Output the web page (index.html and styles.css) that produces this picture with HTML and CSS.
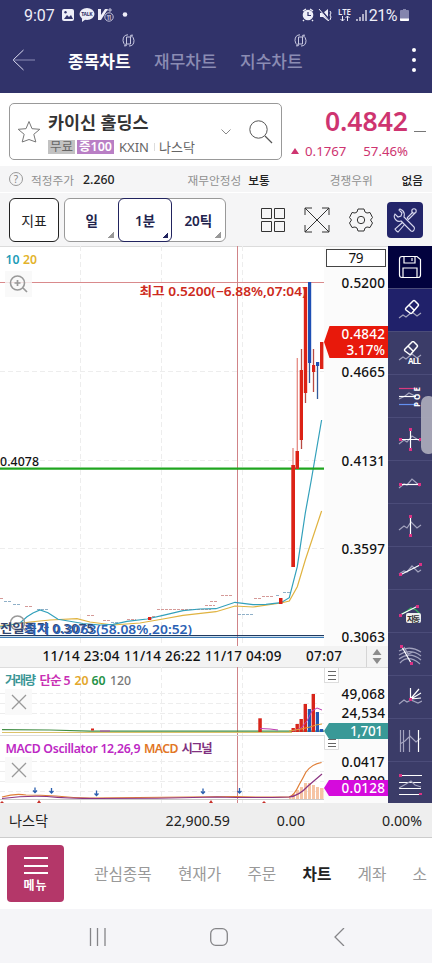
FILE: index.html
```html
<!DOCTYPE html>
<html lang="ko">

<head>
  <meta charset="UTF-8">
  <meta name="viewport" content="width=device-width, initial-scale=1.0">
  <title>종목차트</title>
  <link rel="stylesheet" href="styles.css">
</head>

<body>
  <header class="header">
    <div class="status-bar">
      <span class="clock">9:07</span>
      <svg class="status-left" width="70" height="16" viewBox="0 0 70 16">
        <rect x="1" y="2" width="12" height="12" rx="2" fill="#eeeef8" />
        <path d="M3 12l3-4 2 2 2-2 2 4z" fill="#31336a" />
        <circle cx="4.500" cy="5.200" r="1.200" fill="#31336a" />
        <ellipse cx="26" cy="7" rx="7.500" ry="6" fill="#eeeef8" />
        <path d="M21 11l0 4 4-3z" fill="#eeeef8" />
        <text x="20.300" y="9" font-size="5" font-weight="700" textLength="11.400" fill="#31336a">TALK</text>
        <path d="M37 2h3l0 6 4-6h3l-7 11h-3z" fill="#eeeef8" />
        <circle cx="48" cy="10" r="4.200" fill="#31336a" stroke="#c5c5dd" stroke-width="1" />
        <text x="45" y="13" font-size="7" textLength="6" fill="#eeeef8">11</text>
        <path d="M46 3h5M49 1v4" stroke="#c5c5dd" />
        <circle cx="64" cy="7.500" r="2.300" fill="#eeeef8" />
      </svg>
      <svg class="status-right" width="70" height="16" viewBox="0 0 70 16">
        <circle cx="7" cy="8" r="5.300" fill="#eeeef8" />
        <path d="M2 4l3-2M12 4L9 2M3 13l-1 1M11 13l1 1" stroke="#eeeef8" stroke-width="1.500" fill="none" />
        <path d="M7 5V8.500h3" stroke="#31336a" stroke-width="1.200" fill="none" />
        <path d="M19 6h3l5-4v12l-5-4h-3z" fill="#eeeef8" />
        <path d="M19 2l10 12" stroke="#31336a" stroke-width="2" />
        <path d="M18 2l10 12M29 4l1 2-1 2 1 2-1 3" stroke="#eeeef8" stroke-width="1" fill="none" />
        <text x="37" y="7.500" font-size="8" font-weight="600" textLength="13" lengthAdjust="spacingAndGlyphs" fill="#eeeef8">LTE</text>
        <path d="M41.500 9v5M39.500 12l2 2 2-2M46.500 14V9M44.500 11l2-2 2 2" stroke="#eeeef8" fill="none" />
        <path d="M56 14v-2M59 14v-4M62 14V7M65 14V3" stroke="#eeeef8" stroke-width="1.300" />
      </svg>
      <span class="battery-text">21%</span>
      <svg width="9" height="14" viewBox="0 0 9 14">
        <path d="M1 2h2V1h3v1h2q1 0 1 1v9q0 1-1 1H1q-1 0-1-1V3q0-1 1-1z" fill="#8485ad" />
        <path d="M0 10.500h9V12q0 1-1 1H1q-1 0-1-1z" fill="#fff" />
      </svg>
    </div>
    <nav class="tabs">
      <svg class="back" width="24" height="22" viewBox="0 0 24 22">
        <path d="M11.500 1L1 11l10.500 10" fill="none" stroke="#dcdcf0" />
        <path d="M1 11h22" stroke="#8c8db5" />
      </svg>
      <a class="tab active">종목차트
        <svg class="rotate" width="13" height="13" viewBox="0 0 13 13"><path d="M4.500 3h4v7h-4zM6 .8Q1 1 1 6.500q0 3 3 5M2 11.800h2.200V9.500M7 12q5 0 5-5.500 0-3-3-5M11 1.200H8.800v2.300" /></svg>
      </a>
      <a class="tab">재무차트</a>
      <a class="tab">지수차트
        <svg class="rotate" width="13" height="13" viewBox="0 0 13 13"><path d="M4.500 3h4v7h-4zM6 .8Q1 1 1 6.500q0 3 3 5M2 11.800h2.200V9.500M7 12q5 0 5-5.500 0-3-3-5M11 1.200H8.800v2.300" /></svg>
      </a>
      <div class="more"><i></i><i></i><i></i></div>
    </nav>
  </header>

  <section class="stock">
    <div class="search-box">
      <svg class="star" width="24" height="24" viewBox="0 0 24 24">
        <path d="M12 1.500l3 7.200 7.800.6-6 5 2 7.700L12 19.500 5.200 22l2-7.700-6-5 7.800-.6z" fill="none" stroke="#777" />
      </svg>
      <div class="stock-info">
        <div class="stock-name">카이신 홀딩스</div>
        <div class="stock-meta">
          <span class="badge">무료</span><span class="badge margin">증100</span>
          <span class="ticker">KXIN</span><span class="market">나스닥</span>
        </div>
      </div>
      <svg width="10" height="6" viewBox="0 0 10 6"><path d="M.5.5L5 5 9.500.5" fill="none" stroke="#888" /></svg>
      <svg class="lens" width="24" height="24" viewBox="0 0 24 24">
        <circle cx="9.500" cy="9.500" r="8.700" fill="none" stroke="#555" />
        <path d="M16 16l7 7" stroke="#555" stroke-width="1.200" />
      </svg>
    </div>
    <div class="quote">
      <div class="price">0.4842</div>
      <div class="change"><i class="up"></i><span>0.1767</span><span class="rate">57.46%</span></div>
    </div>
    <i class="dash"></i>
  </section>

  <section class="facts">
    <span class="help">?</span>
    <span class="fact-label">적정주가</span><span class="fact-value num">2.260</span>
    <span class="fact-label safe">재무안정성</span><span class="fact-value">보통</span>
    <span class="fact-label rival">경쟁우위</span><span class="fact-value last">없음</span>
  </section>

  <section class="toolbar">
    <button class="indicator">지표</button>
    <div class="periods">
      <button>일</button>
      <button class="on">1분</button>
      <button>20틱</button>
    </div>
    <svg class="tool-grid" width="24" height="24" viewBox="0 0 24 24">
      <path d="M.5.5h10v10H.5zM13.500.5h10v10h-10zM.5 13.500h10v10H.5zM13.500 13.500h10v10h-10z" fill="none" stroke="#333" />
    </svg>
    <svg class="tool-expand" width="26" height="26" viewBox="0 0 26 26">
      <path d="M1 8V1h7M18 1h7v7M25 18v7h-7M8 25H1v-7M1 1l24 24M25 1L1 25" fill="none" stroke="#333" />
    </svg>
    <svg class="tool-gear" width="24" height="24" viewBox="0 0 24 24">
      <path d="M9 1h6l1 3 2 1 3-.5 2.500 5L21.500 12l2 3-2.500 4.500-3-.5-2 1-1 3H9l-1-3-2-1-3 .5L.500 15l2-3-2-2.500L3 4.500 6 5l2-1z" fill="none" stroke="#333" stroke-linejoin="round" />
      <circle cx="12" cy="12" r="3.700" fill="none" stroke="#333" />
    </svg>
    <button class="tool-draw">
      <svg width="26" height="26" viewBox="0 0 26 26" fill="none" stroke="#d8d8ee" stroke-width="1.100">
        <path d="M8 2l-1 1 3 3-1 3-3 1-3-3q-2 3 1 6 2 2 5 1l10 10q2 1 3-1t0-3L12 10q1-4-1-6-1-1-3-2z" />
        <path d="M11 15l-8 7 1.500 2L6 25l7-8M15 11l6-6M15 11l1.500 1.500L23 6" />
        <circle cx="22" cy="4" r="2.200" />
      </svg>
    </button>
  </section>

  <main class="chart">
    <div class="panels">
      <svg class="panel" width="388" height="400" viewBox="0 246 388 400">
        <rect x="324" y="246" width="64" height="400" fill="#fbfbfb" />
        <path class="edge" d="M0 246.500h388" />
        <path class="grid" d="M0 371.500h324M0 460.500h324M0 548.500h324M80.500 246v400M161.500 246v400M242.500 246v400" />
        <path d="M0 282.500h324" stroke="#d98a8c" />
        <path class="cursor" d="M237.500 246v400" />
        <text x="5.500" y="264" class="label" fill="#1f9db8" textLength="14" lengthAdjust="spacingAndGlyphs">10</text>
        <text x="23" y="264" class="label" fill="#e3b32b" textLength="14" lengthAdjust="spacingAndGlyphs">20</text>

        <!-- zoom in -->
        <g fill="none" stroke="#999">
          <rect x="5" y="271" width="27" height="26" fill="#f8f8f8" fill-opacity=".8" stroke="none" />
          <circle cx="17.500" cy="283" r="7" stroke-width="1.600" />
          <path d="M14.500 283h6M17.500 280v6M23 288l4 4" stroke-width="1.700" />
        </g>

        <!-- flat prints -->
        <g stroke="#d59a98" fill="none">
          <path d="M0 598.500h4M25 606.500h8M87 615.500h7M103 620.500h7M127 619.500h9M152 616.500h3M157 609.500h54M205 605.500h10M210 601.500h8M221 595.500h12M254 598.500h8M262 596.500h12" stroke-dasharray="3 1" />
          <path d="M4 601.500h8M13 604.500h7M37 609.500h12M111 622.500h8M238 614.500h16M276 595.500h3M283 592.500h8" stroke="#8fb0c8" stroke-dasharray="3 1" />
        </g>

        <!-- moving averages -->
        <polyline fill="none" stroke="#e0b340" stroke-width="1.200" points="0,626 30,622 50,620 77,618.700 90,622 113,625 140,623 163,619 183,615.300 216,611.700 235,606 253,607 281,603 289.300,601 297.300,586.700 305.300,560 321.600,511" />
        <polyline fill="none" stroke="#32a0bb" stroke-width="1.200" points="0,627 20,623 27,616.700 33,613 40,610 48,612.700 58,619.300 83,623.500 100,625 113,624.300 127,621.300 147,619 163,615.300 183,610.700 200,609 216,608.700 235,602.300 253,604.700 266,604.300 281,602.700 289.300,597.700 297.300,566.700 305.300,513 311.300,480 321.600,420" />

        <path d="M0 468.700h324" stroke="#1fa51f" stroke-width="2.200" />
        <text x="0" y="466" class="axis small" textLength="39">0.4078</text>

        <!-- candles -->
        <g stroke="#e58b84" stroke-width="1.300">
          <path d="M293 448v18M297.300 358v94" />
          <path d="M301.500 349v100M305.500 392v11M313.500 349v43" stroke="#b84a42" />
          <path d="M309.500 362v21M317.500 362v37" stroke="#315a9c" />
        </g>
        <g fill="#dc2216">
          <rect x="291.300" y="465" width="3.700" height="102" />
          <rect x="295.500" y="451" width="3.500" height="18" />
          <rect x="299.700" y="370" width="3.300" height="70" />
          <rect x="303.800" y="287" width="3.400" height="106" />
          <rect x="312" y="365" width="3.200" height="7" />
          <rect x="320" y="342" width="3.400" height="27" />
          <rect x="279" y="598" width="3.500" height="6" />
          <rect x="148" y="617" width="3.300" height="3" />
        </g>
        <g fill="#1e4fb4">
          <rect x="308" y="282" width="3.200" height="81" />
          <rect x="316" y="362" width="3.200" height="4" />
        </g>
        <text x="139.500" y="296" class="label" fill="#cd2a20" textLength="167" lengthAdjust="spacingAndGlyphs">최고 0.5200(−6.88%,07:04)</text>

        <path d="M0 635.500h324" stroke="#203a60" />
        <path d="M0 637.300h324" stroke="#3c7bb5" stroke-width="1.200" />
        <g fill="none" stroke="#999" stroke-width="1.600">
          <circle cx="17.500" cy="623" r="7" />
          <path d="M14.500 623h6M23 628l4 4" />
        </g>
        <text x="0" y="633" class="label" fill="#33466f" textLength="94" lengthAdjust="spacingAndGlyphs">전일종가 0.3075</text>
        <text x="24" y="634" class="label" fill="#2b61b4" textLength="168" lengthAdjust="spacingAndGlyphs">최저 0.3063(58.08%,20:52)</text>

        <!-- price axis -->
        <rect x="326.500" y="249.500" width="59" height="17" fill="#fff" stroke="#444" />
        <text x="348.500" y="262.500" class="axis soft" textLength="15">79</text>
        <text x="341.500" y="287.500" class="axis" textLength="43.500">0.5200</text>
        <text x="341.500" y="376.500" class="axis" textLength="43.500">0.4665</text>
        <text x="341.500" y="465.500" class="axis" textLength="43.500">0.4131</text>
        <text x="341.500" y="553.500" class="axis" textLength="43.500">0.3597</text>
        <text x="341.500" y="642" class="axis" textLength="43.500">0.3063</text>
        <path d="M324 342l5.500-16H388v32h-58.500z" fill="#e8190b" />
        <text x="341.500" y="339" class="axis tag" textLength="43.500">0.4842</text>
        <text x="346.500" y="355" class="axis tag" textLength="38.500">3.17%</text>
      </svg>

      <svg class="panel" width="388" height="21" viewBox="0 646 388 21">
        <rect x="0" y="646" width="388" height="21" fill="#f3f3f3" />
        <text x="42.500" y="661" class="axis" textLength="77">11/14 23:04</text>
        <text x="124" y="661" class="axis" textLength="76.500">11/14 26:22</text>
        <text x="205" y="661" class="axis" textLength="76.500">11/17 04:09</text>
        <text x="306" y="661" class="axis" textLength="36">07:07</text>
        <path d="M366.500 646v21" stroke="#d5d5d5" />
        <path d="M372.500 655l4.500-6 4.500 6zM372.500 658l4.500 6 4.500-6z" fill="#8c8c8c" />
      </svg>

      <svg class="panel volume" width="388" height="68" viewBox="0 667 388 68">
        <rect x="324" y="667" width="64" height="68" fill="#fbfbfb" />
        <path class="edge" d="M0 667.500h388M0 735.500h324" />
        <path class="grid" d="M0 693.500h324M0 703.500h324M0 713.500h324M0 723.500h324M80.500 667v68M161.500 667v68M242.500 667v68" />
        <path class="cursor" d="M237.500 667v68" />
        <rect x="5" y="689" width="27" height="26" fill="#f9f9f9" />
        <path d="M12 695l14 14M26 695l-14 14" stroke="#999" stroke-width="1.300" />
        <text x="5" y="685" class="label" fill="#3b9696" textLength="31">거래량</text>
        <text x="39.500" y="685" class="label" fill="#c92fb4" textLength="31">단순 5</text>
        <text x="74.500" y="685" class="label" fill="#e3a72b" textLength="14">20</text>
        <text x="91.500" y="685" class="label" fill="#259247" textLength="14">60</text>
        <text x="110" y="685" class="label plain" fill="#777" textLength="21">120</text>
        <path d="M2 732.500h290" stroke="#dcc26a" />
        <path d="M2 729.700l48 .3 40 1.200h234" fill="none" stroke="#438f46" stroke-width="1.200" />
        <g fill="#d8251b">
          <rect x="258.300" y="718.300" width="3.500" height="13.700" />
          <rect x="291.500" y="728" width="3.400" height="4" />
          <rect x="295.500" y="724" width="3.400" height="8" />
          <rect x="299.500" y="719" width="3.400" height="13" />
          <rect x="303.600" y="704" width="3.400" height="28" />
          <rect x="311.600" y="694" width="3.400" height="38" />
          <rect x="91" y="728.500" width="3" height="2" />
        </g>
        <g fill="#2358b3">
          <rect x="307.800" y="709" width="3.200" height="23" />
          <rect x="315.800" y="712" width="3.200" height="20" />
          <rect x="319.800" y="729" width="3.400" height="3" />
        </g>
        <path d="M100 731h10M260 728.500l10 .5 8 1M293 731l8-3 6-7 5-10 5-3 5 2" fill="none" stroke="#bd3bb0" />
        <path d="M289 731l12-2 9-2 6-2 6-1" fill="none" stroke="#e59b32" />
        <rect x="324.500" y="667.500" width="14" height="15" fill="#fff" stroke="#ddd" />
        <path d="M328 671.500h8M328 675.500h8M328 679.500h8" stroke="#666" stroke-width="1.200" />
        <text x="341.500" y="699" class="axis" textLength="43.500">49,068</text>
        <text x="341.500" y="718" class="axis" textLength="43.500">24,534</text>
        <path d="M324 731l5-8H388v16h-59z" fill="#399997" />
        <text x="350" y="736" class="axis tag" textLength="33">1,701</text>
      </svg>

      <svg class="panel" width="388" height="68" viewBox="0 735 388 68">
        <rect x="324" y="735" width="64" height="68" fill="#fbfbfb" />
        <path class="grid" d="M0 761.500h324M0 771.500h324M0 781.500h324M0 791.500h324M80.500 735v68M161.500 735v68M242.500 735v68" />
        <path class="cursor" d="M237.500 735v68" />
        <rect x="5" y="757" width="27" height="26" fill="#f9f9f9" />
        <path d="M12 763l14 14M26 763l-14 14" stroke="#999" stroke-width="1.300" />
        <text x="5.500" y="753" class="label" fill="#bd28c4" textLength="135">MACD Oscillator 12,26,9</text>
        <text x="144" y="753" class="label" fill="#e27625" textLength="34.500">MACD</text>
        <text x="181.500" y="753" class="label" fill="#803180" textLength="31">시그널</text>
        <g fill="#f6c4a4">
          <rect x="289" y="796" width="2.500" height="3" />
          <rect x="292" y="794" width="3" height="5" />
          <rect x="296" y="790" width="3" height="9" />
          <rect x="300" y="787" width="3" height="12" />
          <rect x="304" y="783" width="3" height="16" />
          <rect x="308" y="783" width="3" height="16" />
          <rect x="312" y="785" width="3" height="14" />
          <rect x="316" y="787" width="3" height="12" />
          <rect x="320" y="788" width="3.500" height="11" />
        </g>
        <path d="M0 799.500h324" stroke="#c9c9c9" />
        <path d="M2 797q13-4 24-2 14 0 30 1 18 2 34 2 70-1 146-1.500 20 1 53 .5 5-1 10-12 4-7 7-13 6-8 15.600-9.500" fill="none" stroke="#e07f38" stroke-width="1.200" />
        <path d="M2 798.500q24-3 45-2 20 2 50 2 60 0 120-1.500 40 1 72 0 10-1 19-11l14-12" fill="none" stroke="#8b3582" stroke-width="1.200" />
        <path d="M35 787.500v5M33 790.500l2 2 2-2M51.500 788v5M49.500 791l2 2 2-2M96.500 790.500v5M94.500 793.500l2 2 2-2M203 788.500v5M201 791.500l2 2 2-2M239.500 788v5M237.500 791l2 2 2-2" fill="none" stroke="#2c5fae" stroke-width="1.300" />
        <path d="M0 803l2-2 2 2zM37 803l2-3 2 3zM209 803l2-3 2 3zM262 803l2-2 2 2z" fill="#c8302a" />
        <path d="M324.500 735v14.500h14V735" fill="#fff" stroke="#ddd" />
        <path d="M328 739.500h8M328 743.500h8M328 746.500h8" stroke="#666" stroke-width="1.200" />
        <text x="341.500" y="767" class="axis" textLength="43">0.0417</text>
        <text x="341.500" y="786" class="axis" textLength="43.500">0.0209</text>
        <path d="M324 788l5-8H388v16h-59z" fill="#d50bdc" />
        <text x="341.500" y="793" class="axis tag" textLength="43.500">0.0128</text>
      </svg>
    </div>

    <aside class="draw-tools">
      <div class="tool save">
        <svg viewBox="0 0 24 24"><path class="w" d="M1.500 4q0-2.500 2.500-2.500h15l3.500 3V20q0 2.500-2.500 2.500H4q-2.500 0-2.500-2.500zM6 1.500V8h11V1.500M5 22.500V13h14v9.500M14 3v3" /></svg>
      </div>
      <div class="tool current">
        <svg viewBox="0 0 24 24"><path class="z" d="M1 20l4-3 3 2 6-5 5 4 4-3" /><path class="w fill" d="M8 10l7-7q1-1 2 0l3 3q1 1 0 2l-6 7q-1 1-2 0l-4-3q-1-1 0-2zM11 7l5 5" /></svg>
      </div>
      <div class="tool">
        <svg viewBox="0 0 24 24"><path class="z" d="M1 19l4-3 3 2 6-5 5 4 4-3" /><path class="w fill" d="M7 8l7-7q1-1 2 0l3 3q1 1 0 2l-6 7q-1 1-2 0l-4-3q-1-1 0-2zM10 5l5 5" /><text x="10" y="22.500" font-size="8" font-weight="700" textLength="13">ALL</text></svg>
      </div>
      <div class="tool">
        <svg viewBox="0 0 24 24"><path d="M1 4.500h18" stroke="#d93b7e" /><path class="z" d="M1 15l6-3 4-3 6 3" /><path class="w" d="M1 12.500h17" /><path d="M1 20.500h18" stroke="#638ff0" /><text x="0" y="0" font-size="8" font-weight="700" textLength="20" transform="translate(22 23) rotate(-90)">POE</text></svg>
      </div>
      <div class="tool">
        <svg viewBox="0 0 24 24"><path class="z" d="M1 17l5-4 3 2 5-6 8 5" /><path class="w" d="M2 12.500h21M12.500 2v21" /><path class="dot" d="M1 11h3v3H1zM21 11h3v3h-3zM11 1h3v3h-3zM11 21h3v3h-3z" /></svg>
      </div>
      <div class="tool">
        <svg viewBox="0 0 24 24"><path class="z" d="M1 18l5-4 3 1 5-6 8 7" /><path class="w" d="M2 14.500h21" /><path class="dot" d="M1 13h3v3H1zM20 13h3v3h-3z" /></svg>
      </div>
      <div class="tool">
        <svg viewBox="0 0 24 24"><path class="z" d="M1 17l5-4 3 2 4-6 6 6 4-3" /><path class="w" d="M12.500 3v20" /><path class="dot" d="M11 2h3v3h-3zM11 21h3v3h-3z" /></svg>
      </div>
      <div class="tool">
        <svg viewBox="0 0 24 24"><path class="z" d="M1 18l5-3 3 1 5-6 6 6 3-2" /><path class="w" d="M2 19L22 9" /><path class="dot" d="M1 17h3v3H1zM21 7h3v3h-3z" /></svg>
      </div>
      <div class="tool">
        <svg viewBox="0 0 24 24"><path d="M4 15l5-3 4-3 5 2 4 4" stroke="#35b55c" /><path class="w" d="M2 16L20 7" /><path class="dot" d="M1 15h3v3H1zM18 6h3v3h-3z" /><rect x="8" y="14" width="15" height="10" rx="2" fill="#eee" stroke="none" /><text class="auto" x="9" y="22.500" font-size="8" font-weight="700" textLength="13">자동</text></svg>
      </div>
      <div class="tool">
        <svg viewBox="0 0 24 24"><path class="z" d="M1 9q11-6 22 1M1 13q11-7 22 1M1 17q11-8 22 1M2 21q8-9 20 1M6 5l4 7 5-2" /><path class="w" d="M4 5l9 16" /><path class="dot" d="M2 3h3v3H2zM12 20h3v3h-3z" /></svg>
      </div>
      <div class="tool">
        <svg viewBox="0 0 24 24"><path class="z" d="M1 19l5-4 3 2 4-2 7 3 4-2" /><path class="w" d="M12.500 14V3M12.500 14L21 4M13 14l10-6M13 14l10-1" /><path class="dot" d="M11 13h3v3h-3z" /></svg>
      </div>
      <div class="tool">
        <svg viewBox="0 0 24 24"><path class="z" d="M2.500 2v22M5.500 2v22M11.500 2v22M2 16l5-3 5-5 6 6 5-4" /><path class="w" d="M20.500 2v22" /></svg>
      </div>
      <div class="tool">
        <svg viewBox="0 0 24 24"><path class="w" d="M2 4.500h22M1 11.500h22M1 17.500h22M1 23.500h22" /><path class="z" d="M1 17l7-4 5-3 4 4 6 2" /><path class="dot" d="M1 3h3v3H1zM21 22h3v3h-3z" /></svg>
      </div>
      <div class="handle"></div>
    </aside>
  </main>

  <section class="index-row">
    <span class="index-name">나스닥</span>
    <span class="index-price">22,900.59</span>
    <span class="index-diff">0.00</span>
    <span class="index-rate">0.00%</span>
  </section>

  <nav class="bottom-nav">
    <button class="menu"><i></i><i></i><i></i><span>메뉴</span></button>
    <a>관심종목</a>
    <a>현재가</a>
    <a>주문</a>
    <a class="active">차트</a>
    <a>계좌</a>
    <a>소</a>
  </nav>

  <footer class="system-nav">
    <svg width="18" height="18" viewBox="0 0 18 18"><path d="M1.500 0v18M8.500 0v18M16 0v18" /></svg>
    <svg width="18" height="18" viewBox="0 0 18 18"><rect x=".7" y=".7" width="16.600" height="16.600" rx="5" /></svg>
    <svg width="18" height="18" viewBox="0 0 18 18"><path d="M13 0L4 9l9 9" /></svg>
  </footer>
</body>

</html>
```
FILE: styles.css
```css
* {
  box-sizing: border-box;
}

body {
  width: 432px;
  height: 963px;
  margin: 0;
  overflow: hidden;
  font-family: "Noto Sans", "Noto Sans CJK KR", sans-serif;
  background: #fff;
  color: #222;
}

svg {
  display: block;
  flex: none;
}

button {
  font-family: inherit;
  padding: 0;
  margin: 0;
}

.header {
  height: 93px;
  background: #31336a;
  color: #fff;
}

.status-bar {
  display: flex;
  align-items: center;
  height: 30px;
  padding: 0 23px 0 24px;
  color: #eeeef8;
}

.clock {
  width: 31px;
  font-family: Roboto, sans-serif;
  font-size: 16px;
}

.status-left {
  margin-left: 6px;
}

.status-right {
  margin-left: auto;
  margin-right: -2px;
}

.battery-text {
  margin: 0 3px 0 0;
  font-family: Roboto, sans-serif;
  font-size: 16px;
  letter-spacing: -0.5px;
}

.tabs {
  display: flex;
  align-items: center;
  height: 60px;
  padding-left: 12px;
}

.tab {
  position: relative;
  width: 63px;
  margin-right: 23px;
  font-size: 17px;
  white-space: nowrap;
  color: #8b8cb3;
  font-weight: 500;
}

.tab.active {
  color: #fff;
  font-weight: 700;
}

.back {
  margin-right: 32px;
}

.rotate {
  position: absolute;
  right: -4px;
  top: -14px;
  fill: none;
  stroke: #c8c8e0;
}

.more {
  display: flex;
  flex-direction: column;
  gap: 6px;
  margin: 0 16px 0 auto;
}

.more i {
  width: 4px;
  height: 4px;
  border-radius: 50%;
  background: #fff;
}

.stock {
  display: flex;
  height: 73px;
  padding: 10px 6px 0 9px;
}

.search-box {
  display: flex;
  align-items: center;
  width: 273px;
  height: 57px;
  padding: 0 8px 0 7px;
  border: 1px solid #999;
  border-radius: 5px;
}

.stock-info {
  width: 175px;
  margin: 4px 0 0 8px;
}

.stock-name {
  margin-left: -1px;
  font-size: 17.4px;
  font-weight: 600;
  line-height: 22px;
  color: #333;
}

.stock-meta {
  display: flex;
  align-items: center;
  height: 20px;
  margin: 4px 0 0 -1px;
  font-size: 13px;
  color: #666;
}

.badge {
  width: 27px;
  height: 14px;
  margin-right: 2px;
  font-size: 12.5px;
  line-height: 14px;
  text-align: center;
  background: #c2c2c2;
}

.badge.margin {
  width: 37px;
  color: #fff;
  font-weight: 600;
  background: #b97fc5;
}

.ticker {
  width: 35px;
  margin-left: 3px;
}

.market {
  padding-left: 4px;
  line-height: 8px;
  border-left: 1px solid #ddd;
}

.lens {
  margin-left: 18px;
}

.quote {
  width: 126px;
  text-align: right;
  color: #ce3470;
}

.price {
  height: 36px;
  font-size: 26.5px;
  line-height: 36px;
  font-weight: 600;
}

.change {
  display: flex;
  align-items: center;
  justify-content: flex-end;
  font-size: 13.2px;
  line-height: 24px;
}

.change .rate {
  margin-left: 17px;
}

.up {
  margin-right: 6px;
  border: 4.5px solid transparent;
  border-top: 0;
  border-bottom: 6px solid #ce3470;
}

.dash {
  width: 12px;
  height: 1px;
  margin: 28px 0 0 6px;
  background: #777;
}

.facts {
  display: flex;
  align-items: center;
  height: 27px;
  padding: 0 9px;
  font-size: 11.7px;
  background: #f5f5f6;
  border-bottom: 1px solid #fff;
}

.help {
  width: 14px;
  height: 14px;
  border: 1px solid #999;
  border-radius: 50%;
  font-size: 10px;
  line-height: 12px;
  text-align: center;
  color: #888;
}

.fact-label {
  margin: 0 7px 0 8px;
  color: #909090;
}

.fact-value {
  font-weight: 500;
}

.fact-value.num {
  margin-left: 2px;
  font-size: 12.3px;
}

.fact-label.safe {
  margin-left: 73px;
}

.fact-label.rival {
  margin-left: 60px;
}

.fact-value.last {
  margin-left: auto;
}

.toolbar {
  display: flex;
  align-items: center;
  height: 53px;
  padding: 1px 9px 0;
  background: #f5f5f6;
}

.indicator {
  width: 50px;
  height: 44px;
  margin-right: 5px;
  border: 1px solid #222;
  border-radius: 6px;
  background: #fff;
  font-size: 13.8px;
  color: #222;
}

.periods {
  display: flex;
  width: 162px;
  height: 44px;
  border: 1px solid #999;
  border-radius: 6px;
  background: #fff;
}

.periods button {
  flex: 1;
  margin: -1px 0;
  border: 1px solid transparent;
  border-radius: 6px;
  background: linear-gradient(135deg, transparent 50%, #999 50%) no-repeat right 3px bottom 3px / 7px 7px;
  font-size: 13.5px;
  font-weight: 600;
  color: #22244e;
}

.periods .on {
  border-color: #22245f;
  background-image: linear-gradient(135deg, transparent 50%, #22245f 50%);
  background-size: 5px 5px;
}

.tool-grid {
  margin-left: 35px;
}

.tool-expand {
  margin-left: 19px;
}

.tool-gear {
  margin-left: 19px;
}

.tool-draw {
  display: flex;
  align-items: center;
  justify-content: center;
  width: 36px;
  height: 36px;
  margin-left: auto;
  border: 0;
  border-radius: 4px;
  background: #23256a;
}

.chart {
  display: flex;
  height: 557px;
}

.panels {
  width: 388px;
}

/* the volume tag hangs over the panel below */
.volume {
  position: relative;
  z-index: 1;
  overflow: visible;
}

.edge {
  stroke: #dcdcdc;
}

.grid {
  fill: none;
  stroke: #ededed;
  stroke-dasharray: 5 3;
}

.cursor {
  stroke: #d08488;
}

.label {
  font-size: 12.3px;
  font-weight: 600;
}

.label.plain {
  font-weight: 500;
}

.axis {
  font-size: 13.5px;
  font-weight: 500;
  fill: #111;
}

.axis.small {
  font-size: 12.3px;
}

.axis.soft {
  font-weight: 400;
}

.axis.tag {
  fill: #fff;
}

.draw-tools {
  position: relative;
  width: 44px;
  overflow: hidden;
  background: #3b3c68;
}

.tool {
  display: flex;
  align-items: center;
  justify-content: center;
  height: 43px;
  border-bottom: 1px solid #4b4c79;
}

.tool svg {
  width: 24px;
  height: 24px;
  fill: none;
  stroke-width: 1.2;
}

.tool text {
  fill: #fff;
  stroke: none;
}

.tool .auto {
  fill: #333;
}

.tool .w {
  stroke: #fff;
}

.tool .w.fill {
  fill: #3b3c68;
  stroke-width: 1.5;
}

.tool .z {
  stroke: #a3a3be;
}

.tool .dot {
  fill: #d93284;
}

.tool.save {
  background: #02023e;
}

.tool.current {
  background: #20216a;
}

.tool.current .w.fill {
  fill: #20216a;
}

.handle {
  position: absolute;
  top: 150px;
  right: -4px;
  width: 15px;
  height: 58px;
  border-radius: 7px;
  background: #a9a9b8;
  opacity: 0.95;
}

.index-row {
  display: grid;
  grid-template-columns: 100px 121px 75px 1fr;
  align-items: center;
  height: 35px;
  padding: 0 10px 0 9px;
  background: #eee;
  border-bottom: 1px solid #ccc;
  font-size: 14.2px;
  text-align: right;
}

.index-name {
  text-align: left;
}

.bottom-nav {
  display: flex;
  align-items: center;
  height: 71px;
  padding-left: 7px;
  overflow: hidden;
}

.bottom-nav a {
  flex: none;
  margin-right: 26.2px;
  font-size: 15.7px;
  color: #999;
}

.bottom-nav .active {
  font-weight: 700;
  color: #222;
}

.menu {
  display: flex;
  flex: none;
  flex-direction: column;
  align-items: center;
  width: 57px;
  height: 57px;
  margin: 0 30px 0 0;
  padding-top: 12px;
  border: 0;
  border-radius: 4px;
  background: #b43769;
  color: #fff;
}

.menu i {
  width: 24px;
  height: 2px;
  margin-bottom: 5.5px;
  background: #fff;
}

.menu span {
  margin-top: -2px;
  font-size: 12px;
  line-height: 16px;
  font-weight: 700;
  letter-spacing: 1px;
}

.system-nav {
  display: flex;
  align-items: center;
  justify-content: space-between;
  height: 55px;
  padding: 0 83px 0 89px;
  background: #f5f5f8;
  fill: none;
  stroke: #858588;
  stroke-width: 1.3;
}
```
